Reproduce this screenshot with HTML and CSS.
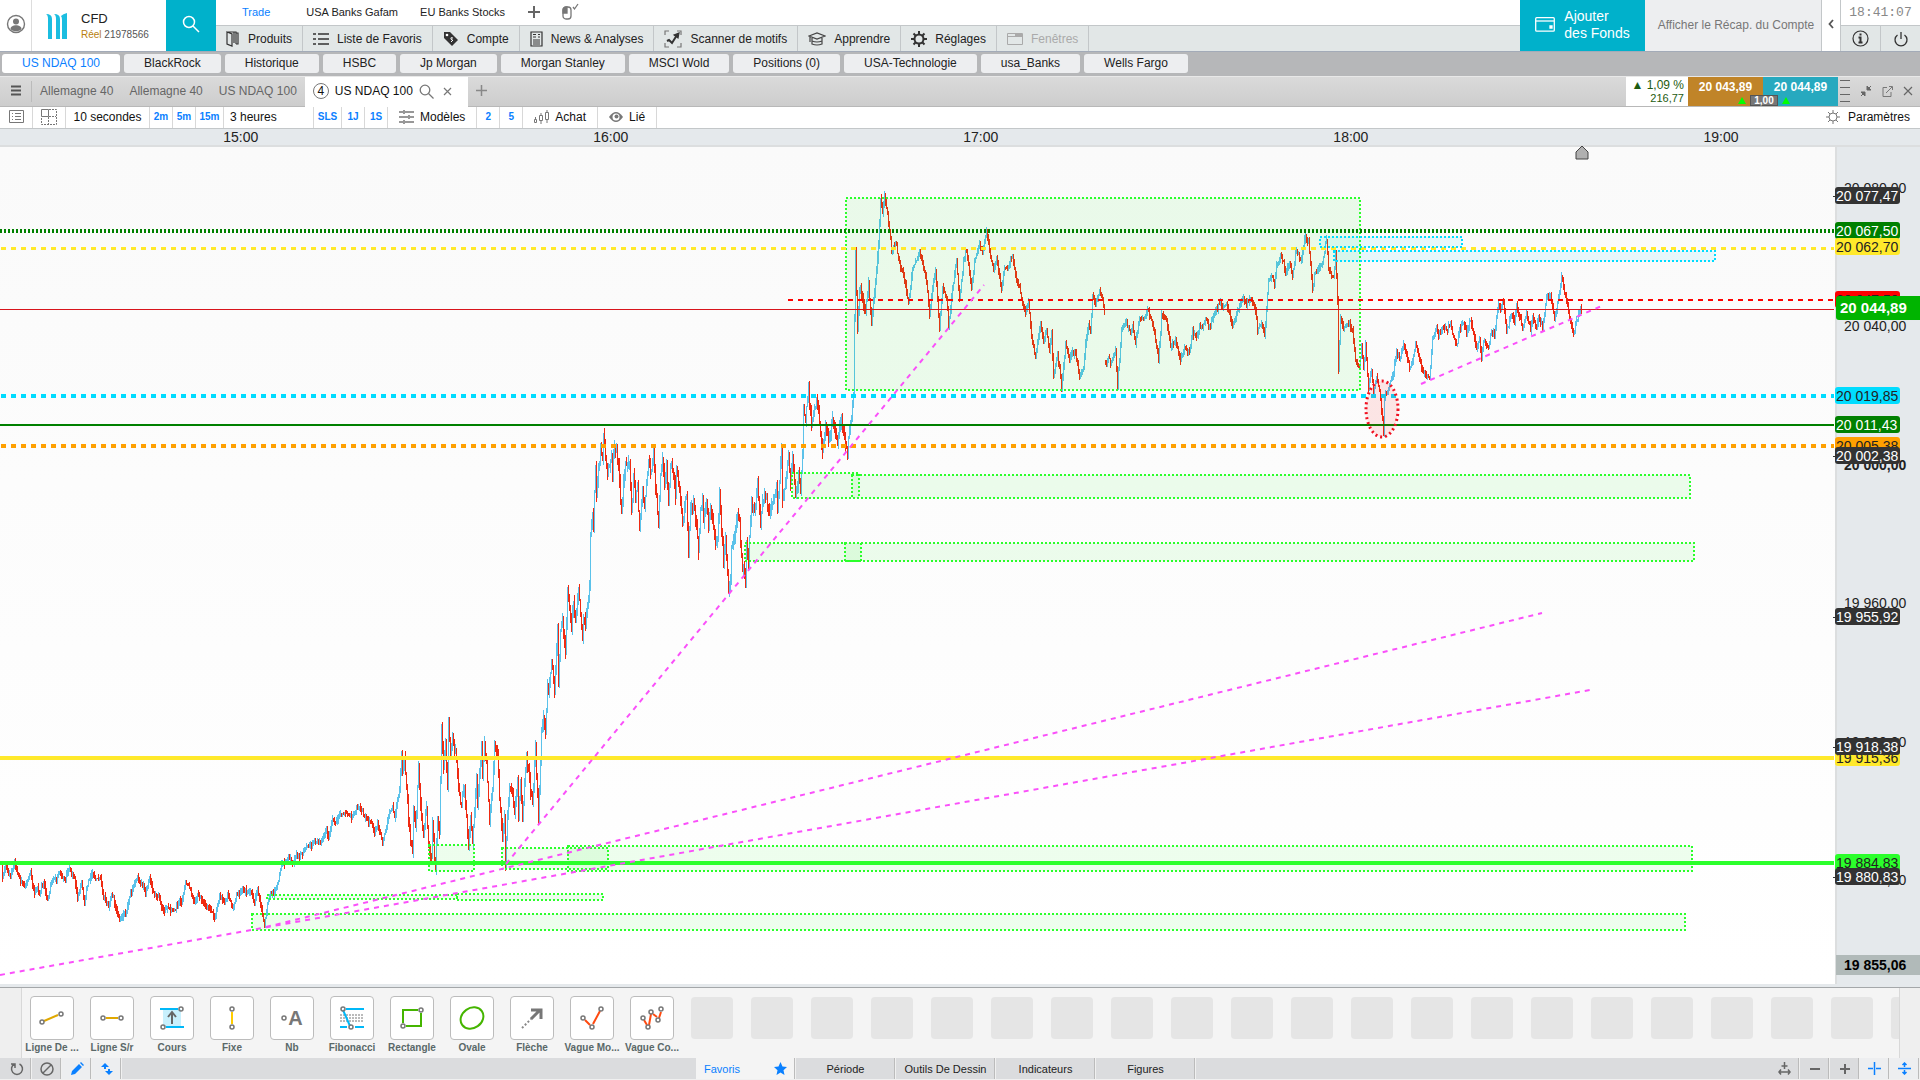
FILE: index.html
```html
<!DOCTYPE html>
<html lang="fr">
<head>
  <meta charset="UTF-8">
  <title>US NDAQ 100</title>
  <link rel="stylesheet" href="styles.css">
</head>
<body>
<header class="topBar">
  <button class="userButton" aria-label="Profil">
    <svg width="20" height="20" viewBox="0 0 20 20"><circle cx="10" cy="10" r="8.5" fill="none" stroke="#777" stroke-width="1.4"/><circle cx="10" cy="7.5" r="3" fill="#777"/><path d="M4.5 15c0-5 11-5 11 0-2 3-9 3-11 0z" fill="#777"/></svg>
  </button>
  <div class="account">
    <svg width="22" height="26" viewBox="0 0 22 26"><path d="M0 1q6 0 6 5v20H2V6q0-4-2-5zM8 1q6 0 6 5v20h-4V6q0-4-2-5zM15 3q2-2 6-3v26h-5V7q0-3-1-4z" fill="#1bbde0"/></svg>
    <div>
      <div class="accountType">CFD</div>
      <div class="accountNumber"><span>Réel</span> 21978566</div>
    </div>
  </div>
  <button class="searchButton" aria-label="Rechercher">
    <svg width="20" height="20" viewBox="0 0 20 20" fill="none" stroke="#fff" stroke-width="1.5"><circle cx="8" cy="8" r="5.5"/><path d="M12 12l6 6"/></svg>
  </button>
  <div class="menus">
    <nav class="layouts">
      <a class="active" href="#">Trade</a>
      <a href="#">USA Banks Gafam</a>
      <a href="#">EU Banks Stocks</a>
      <button aria-label="Ajouter"><svg width="14" height="14" viewBox="0 0 14 14"><path d="M7 1v12M1 7h12" stroke="#666" stroke-width="2"/></svg></button>
      <button aria-label="Souris"><svg width="18" height="18" viewBox="0 0 18 18" fill="none" stroke="#777" stroke-width="1.3"><rect x="2" y="4" width="8" height="12" rx="3"/><path d="M2 10V7q0-3 4-3v6z" fill="#777"/><path d="M12 4l1.500 2L17 1"/></svg></button>
    </nav>
    <nav class="mainMenu">
      <button><svg width="14" height="16" viewBox="0 0 14 16" fill="none" stroke="#333" stroke-width="1.2"><path d="M1 1l5 2v12l-5-2zM1 1h7v11M10 2h2v11h-2M5 1h5v12"/></svg>Produits</button>
      <button><svg width="16" height="14" viewBox="0 0 16 14" stroke="#333" stroke-width="1.5"><path d="M0 2h3M5 2h11M0 7h3M5 7h11M0 12h3M5 12h11"/></svg>Liste de Favoris</button>
      <button><svg width="16" height="16" viewBox="0 0 16 16"><path d="M1 1h6l8 8-6 6-8-8z" fill="#333"/><circle cx="4" cy="4" r="1.300" fill="#fff"/><path d="M10 7q-3-1-2 1t2 1-2 2" fill="none" stroke="#fff"/></svg>Compte</button>
      <button><svg width="13" height="16" viewBox="0 0 13 16" fill="none" stroke="#333" stroke-width="1.200"><path d="M1 1h11v14H1zM3 3.500h3M3 6h3M8 3.500h2M8 6h2M3 9h7M3 11h7M3 13h7"/></svg>News &amp; Analyses</button>
      <button><svg width="18" height="18" viewBox="0 0 18 18" fill="none" stroke="#333" stroke-width="1.200"><path d="M1 5V1h4M13 1h4v4M17 13v4h-4M5 17H1v-4" stroke="#777"/><path d="M3 11l2-1 3 3 5-8" stroke-width="2"/><path d="M10 5l5-2-1 5z" fill="#333"/></svg>Scanner de motifs</button>
      <button><svg width="18" height="14" viewBox="0 0 18 14" fill="none" stroke="#444" stroke-width="1.200"><path d="M1 4l8-3 8 3-8 3zM4 6v6q5 2 10 0V6M4 9q5 2 10 0M2 5v5"/></svg>Apprendre</button>
      <button><svg width="16" height="16" viewBox="0 0 16 16" fill="none" stroke="#333"><circle cx="8" cy="8" r="4.500" stroke-width="2"/><path d="M8 0v4M8 12v4M0 8h4M12 8h4M2.500 2.500L5 5M11 11l2.500 2.500M2.500 13.500L5 11M11 5l2.500-2.500" stroke-width="2"/></svg>Réglages</button>
      <button class="disabled" disabled><svg width="16" height="14" viewBox="0 0 16 14" fill="none" stroke="#aaa"><path d="M.5 1.500h15v11H.5zM.5 4.500h15"/><path d="M8 3h7" stroke-width="2"/></svg>Fenêtres</button>
    </nav>
  </div>
  <button class="addFunds">
    <svg width="20" height="15" viewBox="0 0 20 15" fill="none" stroke="#fff" stroke-width="1.300"><rect x=".7" y=".7" width="18.600" height="13.500" rx="1"/><path d="M1 4h18"/><path d="M15 9h2v2h-2z" fill="#fff"/></svg>
    <span>Ajouter<br>des Fonds</span>
  </button>
  <button class="summary">Afficher le Récap. du Compte</button>
  <button class="collapse" aria-label="Réduire"><svg width="6" height="10" viewBox="0 0 6 10"><path d="M5 1L1.500 5 5 9" fill="none" stroke="#555" stroke-width="1.800"/></svg></button>
  <div class="clockBox">
    <time class="clock">18:41:07</time>
    <div class="clockButtons">
      <button aria-label="Information"><svg width="17" height="17" viewBox="0 0 17 17"><circle cx="8.500" cy="8.500" r="7.500" fill="none" stroke="#333" stroke-width="1.200"/><path d="M8.500 3.500v2M6.500 7.500h2v5M6.500 12.500h4" fill="none" stroke="#333" stroke-width="2"/></svg></button>
      <button aria-label="Quitter"><svg width="16" height="16" viewBox="0 0 16 16" fill="none" stroke="#333" stroke-width="1.300"><path d="M4.500 4a6 6 0 1 0 7 0M8 1v7"/></svg></button>
    </div>
  </div>
</header>

<nav class="watchlists">
  <button class="active">US NDAQ 100</button>
  <button>BlackRock</button>
  <button>Historique</button>
  <button>HSBC</button>
  <button>Jp Morgan</button>
  <button>Morgan Stanley</button>
  <button>MSCI Wold</button>
  <button>Positions (0)</button>
  <button>USA-Technologie</button>
  <button>usa_Banks</button>
  <button>Wells Fargo</button>
</nav>

<div class="chartTabs">
  <button class="burger" aria-label="Menu"><svg width="10" height="11" viewBox="0 0 10 11"><path d="M0 1.500h10M0 5.500h10M0 9.500h10" stroke="#555" stroke-width="2"/></svg></button>
  <button>Allemagne 40</button>
  <button>Allemagne 40</button>
  <button>US NDAQ 100</button>
  <div class="activeTab">
    <span class="tabNumber">4</span>
    <span>US NDAQ 100</span>
    <svg width="15" height="15" viewBox="0 0 15 15" fill="none" stroke="#777" stroke-width="1.300"><circle cx="6" cy="6" r="4.800"/><path d="M9.500 9.500l5 5"/></svg>
    <svg width="9" height="9" viewBox="0 0 9 9"><path d="M1 1l7 7M8 1L1 8" stroke="#777" stroke-width="1.200"/></svg>
  </div>
  <button class="newTab" aria-label="Nouvel onglet"><svg width="11" height="11" viewBox="0 0 11 11"><path d="M5.500 0v11M0 5.500h11" stroke="#888" stroke-width="1.500"/></svg></button>
  <div class="quote">
    <div class="change">
      <div>▲ 1,09 %</div>
      <div class="changePoints">216,77</div>
    </div>
    <button class="sell">20 043,89</button>
    <button class="buy">20 044,89</button>
    <div class="spread"><i></i><b>1,00</b><i></i></div>
  </div>
  <div class="windowButtons">
    <svg class="grip" width="10" height="26" viewBox="0 0 10 26"><path d="M0 2.500h10M0 9.500h10M0 16.500h10M0 23.500h10" stroke="#666"/></svg>
    <button aria-label="Rétrécir"><svg width="12" height="12" viewBox="0 0 12 12"><path d="M7 1v4h4zM5 11V7H1zM8 4l3-3M1 11l3-3" fill="#666" stroke="#666"/></svg></button>
    <button aria-label="Détacher"><svg width="11" height="11" viewBox="0 0 11 11" fill="none" stroke="#777"><path d="M5 1.500H1v9h8V6M4 7l6-6M7 .5h3.500V4"/></svg></button>
    <button aria-label="Fermer"><svg width="10" height="10" viewBox="0 0 10 10"><path d="M1 1l8 8M9 1L1 9" stroke="#666" stroke-width="1.200"/></svg></button>
  </div>
</div>

<div class="toolbar">
  <button class="iconCell" aria-label="Liste"><svg width="15" height="15" viewBox="0 0 15 15" fill="none" stroke="#777"><path d="M.5 1.500h14v12H.5zM3 4.500h1M6 4.500h6M3 7.500h1M6 7.500h6M3 10.500h1M6 10.500h6"/></svg></button>
  <button class="iconCell" aria-label="Grille"><svg width="16" height="16" viewBox="0 0 16 16" fill="none" stroke="#777"><path d="M.5.5h7v7h-7z"/><path d="M8 .5h7.500v15H.5V8M7.500 8v7M8 7.500h7" stroke-dasharray="2 1"/></svg></button>
  <button class="interval">10 secondes</button>
  <button class="short">2m</button>
  <button class="short">5m</button>
  <button class="short wide">15m</button>
  <button class="range">3 heures</button>
  <button class="short wide">SLS</button>
  <button class="short">1J</button>
  <button class="short">1S</button>
  <button class="labeled"><svg width="15" height="14" viewBox="0 0 15 14" fill="none" stroke="#777" stroke-width="1.500"><path d="M0 2h4M6 2h9M0 7h9M11 7h4M0 12h4M6 12h9M5 0v4M10 5v4M5 10v4"/></svg>Modèles</button>
  <button class="short">2</button>
  <button class="short">5</button>
  <button class="labeled"><svg width="15" height="14" viewBox="0 0 15 14" fill="none" stroke="#777"><path d="M.5 9.500h2v3h-2zM5.500 5.500h3v5h-3zM11.500 2.500h3v7h-3zM7 3v2M7 10.500V14M13 0v2M13 9.500V13M1.500 7v2"/></svg>Achat</button>
  <button class="labeled"><svg width="14" height="12" viewBox="0 0 14 12"><path d="M0 6q7-10 14 0-7 10-14 0z" fill="#777"/><circle cx="7" cy="6" r="3.500" fill="#fff"/><circle cx="7.500" cy="5.500" r="2" fill="#777"/></svg>Lié</button>
  <button class="settings"><svg width="14" height="14" viewBox="0 0 14 14" fill="none" stroke="#777"><circle cx="7" cy="7" r="4"/><path d="M7 0v3M7 11v3M0 7h3M11 7h3M2 2l2 2M10 10l2 2M2 12l2-2M10 4l2-2"/></svg>Paramètres</button>
</div>

<main class="chart">
  <div class="timeAxis">
    <span>15:00</span><span>16:00</span><span>17:00</span><span>18:00</span><span>19:00</span>
  </div>
  <div class="plotRow">
    <svg class="plot" viewBox="0 147 1835 837" preserveAspectRatio="none">
      <g fill="none" shape-rendering="crispEdges">
        <path id="barsUp" stroke="#5bc2ea"/>
        <path id="barsDown" stroke="#ef2a12"/>
      </g>
      <g class="zones">
        <rect x="846" y="198" width="514" height="192"/>
        <rect x="792" y="473" width="67" height="25"/>
        <rect x="852" y="475" width="838" height="23"/>
        <rect x="745" y="543" width="116" height="18"/>
        <rect x="845" y="543" width="849" height="18"/>
        <rect x="429" y="845" width="45" height="26"/>
        <rect x="502" y="848" width="106" height="21"/>
        <rect x="568" y="846" width="1124" height="25"/>
        <rect x="267" y="895" width="190" height="4"/>
        <rect x="457" y="894" width="146" height="6"/>
        <rect x="252" y="914" width="1433" height="16"/>
      </g>
      <g class="levels">
        <path d="M0 231H1834" stroke="#008000" stroke-width="4" stroke-dasharray="2 2"/>
        <path d="M1 248.500H1834" stroke="#ffe92b" stroke-width="3" stroke-dasharray="5 5"/>
        <path d="M788 300H1834" stroke="#f00" stroke-width="2" stroke-dasharray="5 5"/>
        <path d="M0 309.500H1834" stroke="#d8141c"/>
        <path d="M1 396H1834" stroke="#00dcff" stroke-width="4" stroke-dasharray="5 5"/>
        <path d="M0 425H1834" stroke="#008000" stroke-width="2"/>
        <path d="M1 446H1834" stroke="#ffa000" stroke-width="4" stroke-dasharray="5 5"/>
        <path d="M0 758H1834" stroke="#ffe92b" stroke-width="4"/>
        <path d="M0 863H1834" stroke="#2bff2b" stroke-width="4"/>
      </g>
      <g class="zones blue">
        <rect x="1320" y="237" width="142" height="10"/>
        <rect x="1334" y="251" width="381" height="10"/>
      </g>
      <g class="trends">
        <path d="M0 975L1590 690M266 927L1542 613M506 864L984 285M1421 384L1604 305"/>
      </g>
      <ellipse class="circled" cx="1382" cy="409" rx="16" ry="28"/>
      <path d="M1576 159v-7l6-6 6 6v7z" fill="#b0b0b0" stroke="#444"/>
    </svg>
    <ul class="priceAxis">
      <li data-price="20080">20 080,00</li>
      <li data-price="20040">20 040,00</li>
      <li class="bold" data-price="20000">20 000,00</li>
      <li data-price="19960">19 960,00</li>
      <li data-price="19920">19 920,00</li>
      <li data-price="19880">19 880,00</li>
      <li class="tag green" data-price="20067.50">20 067,50</li>
      <li class="tag yellow" data-price="20062.70">20 062,70</li>
      <li class="tag red" data-price="20047.50">20 047,50</li>
      <li class="tag cyan" data-price="20019.85">20 019,85</li>
      <li class="tag green" data-price="20011.43">20 011,43</li>
      <li class="tag orange" data-price="20005.38">20 005,38</li>
      <li class="tag yellow" data-price="19915.36">19 915,36</li>
      <li class="tag lime" data-price="19884.83">19 884,83</li>
      <li class="tag dark" data-price="20077.47">20 077,47</li>
      <li class="tag dark" data-price="20002.38">20 002,38</li>
      <li class="tag dark" data-price="19955.92">19 955,92</li>
      <li class="tag dark" data-price="19918.38">19 918,38</li>
      <li class="tag dark" data-price="19880.83">19 880,83</li>
      <li class="current" data-price="20044.89">20 044,89</li>
      <li class="low" data-price="19855.06">19 855,06</li>
    </ul>
  </div>
</main>

<section class="drawTools">
  <div class="toolList" id="toolList">
    <button class="tool"><span><svg width="26" height="26" viewBox="0 0 26 26"><path d="M5 16l14-6" stroke="#e0a800" stroke-width="2"/><circle cx="3" cy="17" r="2"/><circle cx="22" cy="9" r="2"/></svg></span>Ligne De ...</button>
    <button class="tool"><span><svg width="26" height="26" viewBox="0 0 26 26"><path d="M7 13h12" stroke="#e0a800" stroke-width="2"/><circle cx="4" cy="13" r="2"/><circle cx="22" cy="13" r="2"/></svg></span>Ligne S/r</button>
    <button class="tool"><span><svg width="26" height="26" viewBox="0 0 26 26"><path d="M4 4h18v18H4z" fill="#c8f0fd"/><path d="M1 4h18M7 22h18" stroke="#00b8f8" stroke-width="2"/><path d="M13 19V8M9 12l4-5 4 5" stroke="#666" stroke-width="2"/><circle cx="22" cy="4" r="2"/><circle cx="4" cy="22" r="2"/></svg></span>Cours</button>
    <button class="tool"><span><svg width="26" height="26" viewBox="0 0 26 26"><path d="M13 7v12" stroke="#ffcc00" stroke-width="2"/><circle cx="13" cy="4" r="2"/><circle cx="13" cy="22" r="2"/></svg></span>Fixe</button>
    <button class="tool"><span class="letter"><svg width="7" height="8" viewBox="0 0 7 8"><circle cx="3" cy="4" r="2"/></svg>A</span>Nb</button>
    <button class="tool"><span><svg width="26" height="26" viewBox="0 0 26 26"><path d="M1 10h24M1 13h24M1 16h24" stroke="#777" stroke-dasharray="2 1"/><path d="M7 4h18M1 22h7M16 22h9M4 5l7 16" stroke="#00b8f8" stroke-width="2"/><circle cx="4" cy="4" r="2"/><circle cx="12" cy="22" r="2"/></svg></span>Fibonacci</button>
    <button class="tool"><span><svg width="26" height="26" viewBox="0 0 26 26"><path d="M19 5H4v13M22 8v13H7" stroke="#45b500" stroke-width="2"/><circle cx="22" cy="5" r="2"/><circle cx="4" cy="21" r="2"/></svg></span>Rectangle</button>
    <button class="tool"><span><svg width="26" height="26" viewBox="0 0 26 26"><ellipse class="oval" cx="13" cy="13" rx="12" ry="10" transform="rotate(-35 13 13)"/></svg></span>Ovale</button>
    <button class="tool"><span><svg width="26" height="26" viewBox="0 0 26 26"><path d="M3 23l9-9" stroke="#888" stroke-width="2" stroke-dasharray="2 2"/><path d="M12 14l8-8M12 5h10v9" stroke="#777" stroke-width="3"/></svg></span>Flèche</button>
    <button class="tool"><span><svg width="26" height="26" viewBox="0 0 26 26"><path d="M6 15l5 5M14 19l7-13" stroke="#ff4a10" stroke-width="2"/><circle cx="4" cy="13" r="2"/><circle cx="13" cy="22" r="2"/><circle cx="22" cy="4" r="2"/></svg></span>Vague Mo...</button>
    <button class="tool"><span><svg width="26" height="26" viewBox="0 0 26 26"><path d="M5 15l3 5M10 20l2-11M14 9l4 3M20 13l2-6" stroke="#ff4a10" stroke-width="2"/><circle cx="4" cy="13" r="2"/><circle cx="9" cy="22" r="2"/><circle cx="12" cy="7" r="2"/><circle cx="19" cy="15" r="2"/><circle cx="22" cy="4" r="2"/></svg></span>Vague Co...</button>
  </div>
</section>

<footer class="bottomBar">
  <div class="barButtons">
    <button aria-label="Actualiser"><svg width="14" height="14" viewBox="0 0 14 14" fill="none" stroke="#666" stroke-width="1.500"><path d="M9.500 2a5.500 5.500 0 1 1-5 0M1 2h4v4"/></svg></button>
    <button aria-label="Effacer"><svg width="14" height="14" viewBox="0 0 14 14" fill="none" stroke="#666" stroke-width="1.500"><circle cx="7" cy="7" r="6"/><path d="M3 11l8-8"/></svg></button>
    <button class="on" aria-label="Dessiner"><svg width="14" height="14" viewBox="0 0 14 14"><path d="M1 13l1-4 7-7 3 3-7 7zM10 1l1-1 3 3-1 1z" fill="#0a80ff"/></svg></button>
    <button class="on" aria-label="Déplacer"><svg width="12" height="12" viewBox="0 0 12 12" fill="#0a80ff"><path d="M4 0l4 4H0zM8 12l4-4H4zM3 4h2v2H3zM7 6h2v2H7z"/></svg></button>
  </div>
  <nav class="barTabs">
    <button class="active">Favoris<svg width="13" height="13" viewBox="0 0 13 13"><path d="M6.500 0l2 4.500 4.500.5-3.500 3.200 1 4.800-4-2.500L2.500 13l1-4.800L0 5l4.500-.5z" fill="#0a80ff"/></svg></button>
    <button>Période</button>
    <button>Outils De Dessin</button>
    <button>Indicateurs</button>
    <button>Figures</button>
  </nav>
  <div class="barButtons">
    <button aria-label="Ajuster"><svg width="13" height="13" viewBox="0 0 13 13" fill="none" stroke="#666" stroke-width="1.500"><path d="M6.500 0v7M3.500 4h6M1 10h11M3 7.500L1 10l2 2.500M10 7.500l2 2.500-2 2.500"/></svg></button>
    <button aria-label="Dézoomer"><svg width="10" height="10" viewBox="0 0 10 10"><path d="M0 5h10" stroke="#666" stroke-width="2"/></svg></button>
    <button aria-label="Zoomer"><svg width="10" height="10" viewBox="0 0 10 10"><path d="M0 5h10M5 0v10" stroke="#666" stroke-width="2"/></svg></button>
    <button class="on" aria-label="Réticule"><svg width="13" height="13" viewBox="0 0 13 13"><path d="M0 6.500h5M8 6.500h5M6.500 0v13" stroke="#0a80ff" stroke-width="1.500"/></svg></button>
    <button class="on" aria-label="Échelle"><svg width="13" height="13" viewBox="0 0 13 13" fill="none" stroke="#0a80ff" stroke-width="1.500"><path d="M0 6.500h13M6.500 1v4M6.500 8v4M4.500 3l2-2 2 2M4.500 10l2 2 2-2"/></svg></button>
  </div>
</footer>
<script src="chart.js"></script>
</body>
</html>
```
FILE: styles.css
```css
:root {
  --blue: #0a80ff;
  --teal: #00b1cb;
  --panel: #e2e7e7;
  --axis: #e5e9ec;
  --line: #c3c7c9;
}
* {
  box-sizing: border-box;
}
body {
  margin: 0;
  height: 100vh;
  display: flex;
  flex-direction: column;
  overflow: hidden;
  background: #f0f0f0;
  color: #222;
  font: 12px "Liberation Sans", Arial, sans-serif;
}
button {
  margin: 0;
  padding: 0;
  border: 0;
  background: none;
  color: inherit;
  font: inherit;
  white-space: nowrap;
  display: flex;
  align-items: center;
  justify-content: center;
}
svg {
  flex: none;
}

/* header */
.topBar {
  display: flex;
  height: 52px;
  flex: none;
  background: #fff;
  border-bottom: 1px solid #a3abb8;
}
.userButton {
  width: 32px;
  padding-bottom: 3px;
  border-right: 1px solid #ddd;
}
.account {
  width: 134px;
  padding-left: 14px;
  display: flex;
  align-items: center;
  gap: 13px;
}
.accountType {
  font-size: 13px;
  line-height: 18px;
}
.accountNumber {
  font-size: 10px;
  line-height: 14px;
  color: #555;
}
.accountNumber span {
  color: #b8800e;
}
.searchButton {
  width: 50px;
  padding-bottom: 4px;
  background: var(--teal);
}
.menus {
  flex: 1;
  display: flex;
  flex-direction: column;
}
.layouts {
  height: 25px;
  display: flex;
  align-items: center;
  padding: 0 0 2px 26px;
  font-size: 11px;
}
.layouts a {
  color: #222;
  text-decoration: none;
  margin-right: 22px;
}
.layouts a:first-child {
  margin-right: 36px;
}
.layouts a.active {
  color: var(--blue);
}
.layouts button {
  margin-right: 20px;
}
.mainMenu {
  flex: 1;
  display: flex;
  background: var(--panel);
  border-top: 1px solid var(--line);
}
.mainMenu button {
  padding: 0 10px;
  gap: 8px;
  border-right: 1px solid var(--line);
}
.mainMenu .disabled {
  color: #aaa;
}
.addFunds {
  width: 125px;
  gap: 9px;
  padding-bottom: 2px;
  background: var(--teal);
  color: #fff;
  font-size: 14px;
  line-height: 17px;
  text-align: left;
}
.summary {
  width: 176px;
  padding: 0 0 2px 6px;
  background: #edeef0;
  color: #777;
}
.collapse {
  width: 20px;
  padding-bottom: 4px;
  border: solid var(--line);
  border-width: 0 1px;
}
.clockBox {
  width: 79px;
  display: flex;
  flex-direction: column;
}
.clock {
  height: 25px;
  line-height: 26px;
  text-align: center;
  color: #888;
  font-family: "Liberation Mono", monospace;
  font-size: 13px;
}
.clockButtons {
  flex: 1;
  display: flex;
  background: var(--panel);
  border-top: 1px solid var(--line);
}
.clockButtons button {
  flex: 1;
}
.clockButtons button + button {
  border-left: 1px solid var(--line);
}

/* watchlist row */
.watchlists {
  flex: none;
  display: flex;
  gap: 4px;
  height: 24px;
  padding: 2px 2px 3px;
  background: #b6b7b9;
}
.watchlists button {
  padding: 0 20px 2px;
  border-radius: 3px;
  background: #edeef0;
}
.watchlists .active {
  background: #fff;
  color: var(--blue);
}

/* chart tabs */
.chartTabs {
  flex: none;
  display: flex;
  height: 31px;
  border-top: 1px solid #e8e8e8;
  border-bottom: 1px solid #b8b8b8;
  background: linear-gradient(#dadada, #cdcdcd);
  color: #666;
}
.chartTabs > button {
  margin: 0 8px;
  padding-bottom: 2px;
}
.chartTabs > .burger {
  width: 32px;
  margin: 4px 0;
  border-right: 1px solid #bbb;
}
.activeTab {
  display: flex;
  align-items: center;
  gap: 6px;
  height: 30px;
  padding: 0 9px 2px 8px;
  background: #fff;
  color: #111;
}
.activeTab svg:last-child {
  margin: 0 7px 0 3px;
}
.tabNumber {
  width: 16px;
  height: 16px;
  border: 1px solid #777;
  border-radius: 50%;
  line-height: 14px;
  text-align: center;
}
.quote {
  position: relative;
  display: flex;
  margin-left: auto;
  font-weight: bold;
}
.change {
  width: 62px;
  padding: 2px 4px 0 0;
  background: #fff;
  color: #1e5c10;
  text-align: right;
  font-weight: normal;
  line-height: 13px;
}
.changePoints {
  font-size: 11px;
}
.sell, .buy {
  width: 75px;
  padding-bottom: 9px;
  background: #c08428;
  color: #fff;
}
.buy {
  background: #27a9bf;
}
.spread {
  position: absolute;
  right: 48px;
  bottom: 0;
  display: flex;
  align-items: center;
  gap: 4px;
}
.spread b {
  width: 28px;
  border: 1px solid #555;
  background: #777;
  color: #fff;
  font-size: 10px;
  line-height: 9px;
  text-align: center;
}
.spread i {
  border: 4px solid transparent;
  border-bottom: 7px solid #0f0;
  border-top: 0;
}
.windowButtons {
  display: flex;
  align-items: center;
  gap: 10px;
  width: 82px;
  padding: 0 0 1px 2px;
}

/* toolbar */
.toolbar {
  flex: none;
  display: flex;
  height: 22px;
  background: #fff;
  border-bottom: 1px solid var(--line);
  color: #111;
}
.toolbar button {
  padding-bottom: 2px;
  border-right: 1px solid #d8d8d8;
}
.toolbar .iconCell {
  width: 33px;
}
.toolbar .interval {
  width: 84px;
}
.toolbar .range {
  width: 90px;
  padding-left: 6px;
  justify-content: flex-start;
}
.toolbar .short {
  width: 23px;
  color: var(--blue);
  font-size: 10px;
  font-weight: bold;
}
.toolbar .wide {
  width: 28px;
}
.toolbar .labeled {
  padding: 0 11px 2px;
  gap: 6px;
}
.toolbar .settings {
  margin-left: auto;
  padding-right: 10px;
  gap: 8px;
  border: 0;
}

/* chart */
.chart {
  flex: 1;
  min-height: 0;
  display: flex;
  flex-direction: column;
  border-bottom: 3px solid var(--axis);
}
.timeAxis {
  flex: none;
  display: flex;
  height: 18px;
  padding-left: 2.9%;
  background: var(--axis);
  border-bottom: 2px solid #dcdedf;
  font-size: 14px;
  line-height: 17px;
}
.timeAxis span {
  flex: 0 0 19.85%;
  text-align: center;
}
.plotRow {
  flex: 1;
  min-height: 0;
  display: flex;
}
.plot {
  flex: 1;
  min-width: 0;
  height: 100%;
  overflow: visible;
  background: linear-gradient(#fafafa, #fff);
}
.zones {
  fill: rgba(43, 240, 43, .08);
  stroke: #2bff2b;
  stroke-width: 2;
  stroke-dasharray: 2 2;
}
.zones.blue {
  fill: rgba(0, 210, 255, .08);
  stroke: #00dcff;
}
.trends {
  fill: none;
  stroke: #fa50fa;
  stroke-width: 2;
  stroke-dasharray: 5 5;
}
.circled {
  fill: rgba(255, 0, 0, .09);
  stroke: #f01020;
  stroke-width: 3;
  stroke-dasharray: 2 3;
}
.priceAxis {
  position: relative;
  width: 85px;
  margin: 0;
  padding: 0;
  border-left: 2px solid #dcdedf;
  background: var(--axis);
  list-style: none;
  font-size: 14px;
}
.priceAxis li {
  position: absolute;
  left: 7px;
  line-height: 18px;
  margin-top: -9px;
  white-space: nowrap;
}
.priceAxis .bold {
  font-weight: bold;
}
.priceAxis .tag {
  left: -2px;
  width: 65px;
  height: 17px;
  padding-left: 1px;
  border-radius: 3px;
}
.priceAxis .green {
  background: #008000;
  color: #fff;
}
.priceAxis .yellow {
  background: #ffe92b;
}
.priceAxis .red {
  background: #f00;
}
.priceAxis .cyan {
  background: #00dcff;
}
.priceAxis .orange {
  background: #ffa000;
}
.priceAxis .lime {
  background: #2bff2b;
}
.priceAxis .dark {
  background: #333;
  color: #fff;
}
.priceAxis .dark::before {
  content: "";
  position: absolute;
  left: -2px;
  top: 9px;
  width: 3px;
  height: 1px;
  background: #333;
}
.priceAxis .current {
  left: -1px;
  right: 0;
  height: 24px;
  margin-top: -13px;
  padding-left: 4px;
  border-radius: 3px 0 0 3px;
  background: #00b400;
  color: #fff;
  font-size: 15px;
  font-weight: bold;
  line-height: 24px;
}
.priceAxis .low {
  left: -1px;
  right: 0;
  height: 20px;
  margin-top: -11px;
  padding-left: 8px;
  background: #b1bab9;
  color: #000;
  font-weight: bold;
  line-height: 21px;
}

/* drawing tools */
.drawTools {
  flex: none;
  height: 71px;
  padding: 0 20px 0 21px;
  border-top: 1px solid #a4a7a9;
  background: #efefef;
}
.toolList {
  display: flex;
  height: 70px;
  padding-top: 8px;
  overflow: hidden;
  border: solid #d8d8d8;
  border-width: 0 1px;
  background: #f4f4f4;
}
.tool {
  flex: 0 0 60px;
  flex-direction: column;
  justify-content: flex-start;
  color: #5a6868;
  font-size: 10px;
  font-weight: bold;
  line-height: 16px;
}
.tool span {
  display: flex;
  align-items: center;
  justify-content: center;
  width: 44px;
  height: 44px;
  border: 1px solid #bcbcbc;
  border-radius: 4px;
  background: #fff;
}
.tool svg {
  fill: none;
}
.tool circle {
  stroke: #777;
  stroke-width: 1.500px;
}
.tool .oval {
  stroke: #45b500;
  stroke-width: 2px;
}
.tool .letter {
  color: #777;
  font-size: 20px;
}
.slot {
  flex: 0 0 42px;
  height: 42px;
  margin: 1px 9px;
  border-radius: 4px;
  background: #e5e5e5;
}

/* bottom bar */
.bottomBar {
  flex: none;
  display: flex;
  justify-content: space-between;
  height: 22px;
  padding-left: 2px;
  background: #dbdcde;
  border-bottom: 1px solid #f0f0f0;
}
.barButtons, .barTabs {
  display: flex;
}
.barButtons button {
  width: 30px;
  border: solid #f0f0f0;
  border-width: 0 1px 0 0;
  box-shadow: inset -1px 0 #bbb;
}
.barButtons .on {
  background: #edeef0;
}
.barTabs button {
  width: 100px;
  border-right: 1px solid #f0f0f0;
  box-shadow: inset -1px 0 #bbb;
  font-size: 11px;
}
.barTabs .active {
  justify-content: space-between;
  padding: 0 8px;
  background: #f4f4f4;
  color: var(--blue);
}
```
FILE: chart.js
```js
// turning points of the 10 second series, x then y
const points = [
  2,863,3,877,6,865,11,875,15,862,18,873,25,887,31,872,35,893,38,887,40,895,44,883,48,900,52,883,59,873,65,877,70,868,75,877,78,897,82,882,
  85,902,89,880,93,872,97,878,101,878,104,897,109,907,112,893,116,907,120,919,127,910,131,892,138,877,142,883,146,893,150,877,155,895,
  160,898,164,910,168,907,176,910,180,900,182,903,186,882,190,887,195,903,199,895,204,902,210,907,215,918,220,895,225,902,229,895,
  233,908,238,893,243,890,247,893,251,890,255,902,258,888,261,903,265,925,268,903,271,893,274,893,279,880,282,863,289,857,293,863,
  296,857,302,853,306,847,314,843,322,840,327,830,329,838,333,818,336,823,341,813,347,813,352,818,355,813,360,806,365,817,372,822,
  375,833,378,823,383,843,388,820,393,805,395,817,400,788,402,755,403,773,405,758,407,787,409,823,413,852,414,807,416,827,419,765,
  421,803,424,833,427,807,429,847,432,857,433,823,436,868,438,820,440,833,442,727,444,767,446,743,448,785,449,718,451,752,453,738,
  457,762,459,787,461,803,465,787,467,817,469,845,471,817,473,843,477,778,478,803,482,747,483,777,485,743,487,763,490,820,493,787,
  495,747,498,755,500,797,503,838,505,817,506,867,508,813,510,787,513,793,515,813,518,778,519,817,521,783,523,818,527,753,533,803,
  536,747,539,817,542,730,544,715,546,733,548,683,549,693,552,663,553,667,555,693,558,627,559,680,561,630,563,617,566,653,568,590,
  572,627,574,602,576,620,579,587,583,638,584,617,586,625,588,603,590,587,591,533,593,513,594,528,595,490,596,467,597,497,599,468,
  601,448,603,460,604,434,606,457,608,473,612,457,613,477,614,453,617,450,619,465,622,512,626,463,630,462,632,512,634,473,636,497,
  638,483,640,528,643,488,645,507,649,460,652,470,654,448,656,490,659,523,661,473,663,458,665,482,667,463,669,503,671,467,674,473,
  676,497,677,467,680,490,683,525,686,498,687,497,689,552,691,507,694,500,697,523,699,552,701,510,703,497,704,522,707,500,709,528,
  711,507,713,520,716,543,718,540,720,492,722,530,724,563,726,537,729,592,731,580,732,547,735,537,738,513,740,520,743,570,744,567,
  746,582,747,543,749,562,751,520,752,503,755,510,758,483,761,525,763,500,767,497,770,513,774,497,777,487,778,507,782,448,783,500,
  786,483,789,455,791,483,793,455,796,495,799,473,801,488,803,453,804,410,806,420,809,386,812,423,817,397,820,423,823,452,826,423,
  829,440,833,417,838,443,842,417,845,437,848,453,851,420,854,393,855,320,856,253,858,330,860,290,866,310,869,283,872,322,876,280,
  879,247,881,198,883,213,885,195,887,208,890,230,892,253,896,243,901,267,903,270,909,303,913,267,917,260,920,250,923,263,927,280,
  930,315,933,287,936,270,940,327,943,287,947,297,949,327,953,287,957,260,960,300,964,260,967,250,972,288,976,257,980,243,983,252,
  987,230,990,250,994,270,997,257,1002,290,1005,267,1009,267,1013,255,1017,280,1021,293,1026,313,1029,300,1032,337,1036,355,1041,323,
  1044,340,1047,330,1050,350,1052,333,1054,377,1058,353,1060,367,1062,388,1066,343,1070,360,1073,350,1076,352,1080,375,1084,367,
  1086,343,1089,323,1091,330,1093,295,1096,305,1100,290,1103,297,1105,313,1106,362,1109,357,1111,363,1116,350,1118,387,1122,330,
  1127,320,1131,333,1133,325,1136,343,1140,317,1144,320,1148,310,1153,323,1159,360,1162,313,1167,320,1171,347,1176,340,1181,360,
  1185,347,1190,350,1193,330,1197,337,1201,327,1207,320,1211,327,1215,313,1219,303,1223,307,1227,303,1233,327,1238,310,1244,297,
  1247,305,1251,297,1256,310,1258,330,1262,323,1265,335,1267,307,1269,280,1273,277,1275,285,1277,265,1282,257,1286,272,1290,262,
  1293,275,1297,250,1301,260,1306,237,1309,240,1313,290,1315,273,1320,267,1323,263,1327,239,1329,268,1334,277,1336,252,1338,300,
  1339,370,1341,317,1344,328,1348,323,1353,330,1356,360,1360,367,1362,347,1364,367,1366,343,1369,387,1372,370,1374,393,1377,377,
  1380,390,1381,400,1384,433,1385,400,1388,390,1391,380,1394,373,1397,350,1400,358,1404,343,1408,360,1411,367,1413,360,1416,343,
  1420,357,1424,373,1430,378,1433,337,1437,328,1439,337,1443,327,1448,330,1451,323,1453,333,1457,345,1460,327,1464,322,1467,332,
  1471,320,1474,332,1477,347,1480,340,1482,357,1484,342,1489,347,1492,332,1495,337,1497,317,1499,305,1501,310,1504,302,1507,330,
  1512,313,1515,322,1517,303,1519,313,1523,327,1527,313,1531,330,1533,317,1537,327,1539,317,1543,328,1547,297,1551,295,1555,317,
  1560,293,1562,276,1565,292,1567,300,1570,318,1574,333,1577,320,1581,307,1582,310
];

// series breaks here, no bar joins the two sides
const gapAt = 1106;

let seed = 7;
function random() {
  seed = (seed * 16807) % 2147483647;
  return seed / 2147483647;
}

function drawBars() {
  let up = '';
  let down = '';
  let last = points[1];
  for (let i = 0; i < points.length - 2; i += 2) {
    let [x1, y1, x2, y2] = points.slice(i, i + 4);
    for (let x = x1 + 1; x <= x2; x++) {
      let noise = x > 400 && x < 880 ? 14 : 8;
      let y = y1 + (y2 - y1) * (x - x1) / (x2 - x1);
      if (x === gapAt) {
        last = y;
      }
      // only every third bar leaves the trend, so colours come in short runs
      if (x < x2 && x % 3 === 0) {
        y += (random() - 0.5) * noise;
      }
      let top = Math.round(Math.min(last, y) - random() * noise / 2);
      let bottom = Math.round(Math.max(last, y) + random() * noise / 2) + 1;
      let bar = 'M' + (x - 0.5) + ' ' + top + 'V' + bottom;
      if (y < last) {
        up += bar;
      } else {
        down += bar;
      }
      last = y;
    }
  }
  document.getElementById('barsUp').setAttribute('d', up);
  document.getElementById('barsDown').setAttribute('d', down);
}

function placePrices() {
  const high = 20091.70;
  const span = 241.73;
  document.querySelectorAll('[data-price]').forEach((item) => {
    item.style.top = (high - item.dataset.price) / span * 100 + '%';
  });
}

function addSlots() {
  let list = document.getElementById('toolList');
  for (let i = 0; i < 21; i++) {
    let slot = document.createElement('div');
    slot.className = 'slot';
    list.appendChild(slot);
  }
}

drawBars();
placePrices();
addSlots();
```
